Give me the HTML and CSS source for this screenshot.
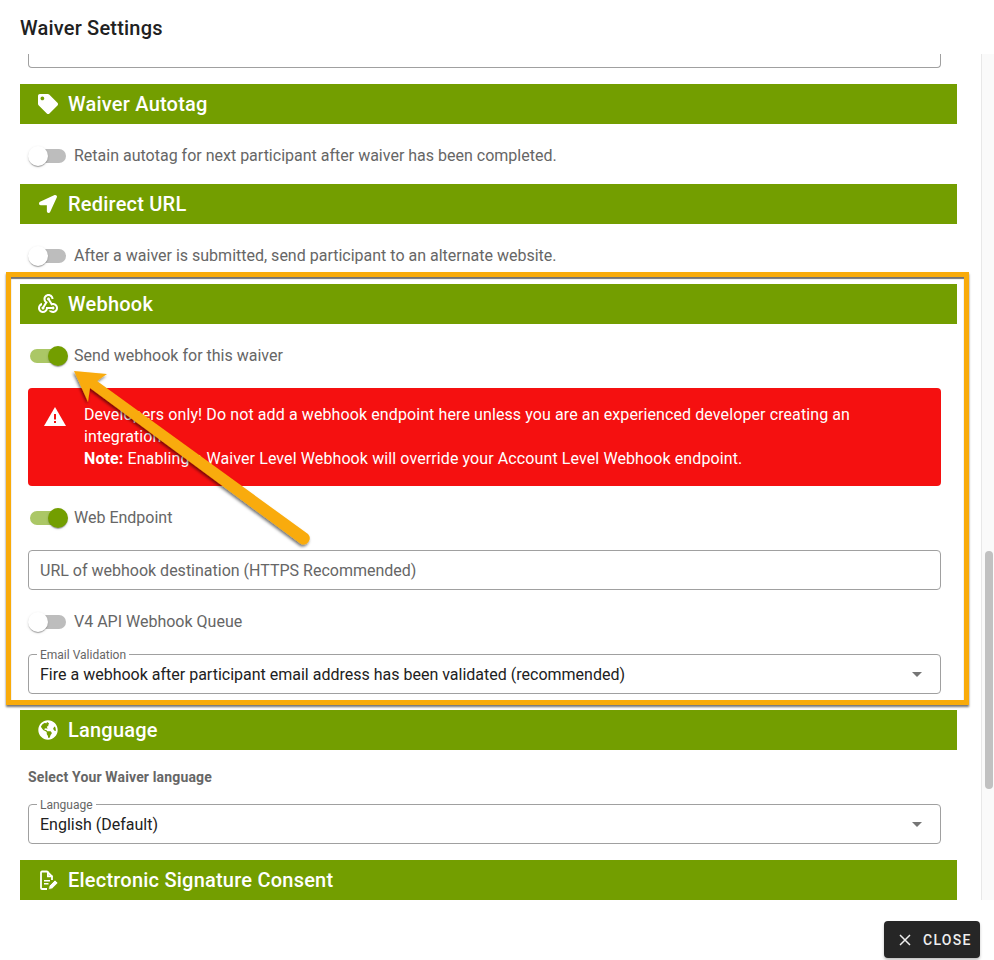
FILE: index.html
```html
<!DOCTYPE html>
<html lang="en">
<head>
<meta charset="utf-8">
<title>Waiver Settings</title>
<link rel="stylesheet" href="styles.css">
</head>
<body>
<div class="dialog">
  <header class="title-row"><h1 class="title">Waiver Settings</h1></header>
  <div class="middle">
    <main class="content">
      <div class="cut-input"></div>

      <section class="section sec-autotag">
        <h2 class="bar">
          <svg class="bar-icon" viewBox="0 0 512 512"><path fill="#fff" d="M0 252.118V48C0 21.49 21.49 0 48 0h204.118a48 48 0 0 1 33.941 14.059l211.882 211.882c18.745 18.745 18.745 49.137 0 67.882L293.823 497.941c-18.745 18.745-49.137 18.745-67.882 0L14.059 286.059A48 48 0 0 1 0 252.118zM112 64c-26.51 0-48 21.49-48 48s21.49 48 48 48 48-21.49 48-48-21.49-48-48-48z"/></svg>
          <span>Waiver Autotag</span>
        </h2>
        <div class="switch-row first"><span class="switch"><span class="thumb"></span></span><span class="label">Retain autotag for next participant after waiver has been completed.</span></div>
      </section>

      <section class="section sec-redirect">
        <h2 class="bar">
          <svg class="bar-icon arrow-icon" viewBox="0 0 512 512"><path fill="#fff" d="M444.52 3.52L28.74 195.42c-47.97 22.39-31.98 92.75 19.19 92.75h175.91v175.91c0 51.17 70.36 67.17 92.75 19.19l191.9-415.78c15.99-38.39-25.59-79.97-63.97-63.97z"/></svg>
          <span>Redirect URL</span>
        </h2>
        <div class="switch-row first"><span class="switch"><span class="thumb"></span></span><span class="label">After a waiver is submitted, send participant to an alternate website.</span></div>
      </section>

      <section class="section sec-webhook">
        <h2 class="bar">
          <svg class="bar-icon webhook" viewBox="0 0 24 24"><path fill="#fff" d="M10 15h5.88c.27-.31.67-.5 1.12-.5.83 0 1.5.67 1.5 1.5s-.67 1.5-1.5 1.5c-.44 0-.84-.19-1.12-.5H11.9c-.46 2.28-2.48 4-4.9 4-2.76 0-5-2.24-5-5 0-2.42 1.72-4.44 4-4.9v2.07c-1.16.41-2 1.53-2 2.83 0 1.65 1.35 3 3 3s3-1.35 3-3v-1zm2.5-11c1.65 0 3 1.35 3 3h2c0-2.76-2.24-5-5-5s-5 2.24-5 5c0 1.43.6 2.71 1.55 3.62l-2.35 3.9c-.68.14-1.2.75-1.2 1.48 0 .83.67 1.5 1.5 1.5s1.5-.67 1.5-1.5c0-.16-.02-.31-.07-.45l3.38-5.63C10.49 9.61 9.5 8.42 9.5 7c0-1.65 1.35-3 3-3zm4.5 9c-.64 0-1.23.2-1.72.54l-3.05-5.07C11.53 8.35 11 7.74 11 7c0-.83.67-1.5 1.5-1.5S14 6.17 14 7c0 .15-.02.29-.06.43l2.19 3.65c.28-.05.57-.08.87-.08 2.76 0 5 2.24 5 5s-2.24 5-5 5c-1.85 0-3.47-1.01-4.33-2.5h2.67c.48.32 1.05.5 1.66.5 1.65 0 3-1.35 3-3s-1.35-3-3-3z"/></svg>
          <span>Webhook</span>
        </h2>
        <div class="switch-row"><span class="switch on"><span class="thumb"></span></span><span class="label">Send webhook for this waiver</span></div>
        <div class="alert">
          <svg class="alert-icon" viewBox="0 0 22 19"><path fill="#fff" d="M11 0 22 19H0z"/><rect x="10" y="7" width="2" height="5.5" fill="#f51010"/><rect x="10" y="14" width="2" height="2" fill="#f51010"/></svg>
          <div class="alert-text">Developers only! Do not add a webhook endpoint here unless you are an experienced developer creating an integration.<br><strong>Note:</strong> Enabling a Waiver Level Webhook will override your Account Level Webhook endpoint.</div>
        </div>
        <div class="switch-row"><span class="switch on"><span class="thumb"></span></span><span class="label">Web Endpoint</span></div>
        <div class="field"><span class="placeholder">URL of webhook destination (HTTPS Recommended)</span></div>
        <div class="switch-row"><span class="switch"><span class="thumb"></span></span><span class="label">V4 API Webhook Queue</span></div>
        <div class="field select">
          <span class="float-label">Email Validation</span>
          <span class="value">Fire a webhook after participant email address has been validated (recommended)</span>
          <span class="caret"></span>
        </div>
      </section>

      <section class="section sec-language">
        <h2 class="bar">
          <svg class="bar-icon" viewBox="0 0 496 512"><path fill="#fff" d="M248 8C111.03 8 0 119.03 0 256s111.03 248 248 248 248-111.03 248-248S384.97 8 248 8zm82.29 357.6c-3.9 3.88-7.99 7.95-11.31 11.28-2.99 3-5.1 6.7-6.17 10.71-1.51 5.66-2.73 11.38-4.77 16.87l-17.39 46.85c-13.76 3-28 4.69-42.65 4.69v-27.38c1.69-12.62-7.64-36.26-22.63-51.25-6-6-9.37-14.14-9.37-22.63v-32.01c0-11.64-6.27-22.34-16.46-27.97-14.37-7.95-34.81-19.06-48.81-26.11-11.48-5.78-22.1-13.14-31.65-21.75l-.8-.72a114.792 114.792 0 0 1-18.06-20.74c-9.38-13.77-24.66-36.42-34.59-51.14 20.47-45.5 57.36-82.04 103.2-101.89l24.01 12.01C203.48 89.74 216 82.01 216 70.11v-11.3c7.99-1.29 16.12-2.11 24.39-2.42l28.3 28.3c6.25 6.25 6.25 16.38 0 22.63L264 112l-10.34 10.34c-3.12 3.12-3.12 8.19 0 11.31l4.69 4.69c3.12 3.12 3.12 8.19 0 11.31l-8 8a8.008 8.008 0 0 1-5.66 2.34h-8.99c-2.08 0-4.08.81-5.58 2.27l-9.92 9.65a8.008 8.008 0 0 0-1.58 9.31l15.59 31.19c2.66 5.32-1.21 11.58-7.15 11.58h-5.64c-1.93 0-3.79-.7-5.24-1.96l-9.28-8.06a16.017 16.017 0 0 0-15.55-3.1l-31.17 10.39a11.95 11.95 0 0 0-8.17 11.34c0 4.53 2.56 8.66 6.61 10.69l11.08 5.54c9.41 4.71 19.79 7.16 30.31 7.16s22.59 27.29 32 32h66.75c8.49 0 16.62 3.37 22.63 9.37l13.69 13.69a30.503 30.503 0 0 1 8.93 21.57 46.536 46.536 0 0 1-13.72 32.98zM417 274.25c-5.79-1.45-10.84-5-14.15-9.97l-17.98-26.97a23.97 23.97 0 0 1 0-26.62l19.59-29.38c2.32-3.47 5.5-6.29 9.24-8.15l12.98-6.49C440.2 193.59 448 223.87 448 256c0 8.67-.74 17.16-1.82 25.54L417 274.25z"/></svg>
          <span>Language</span>
        </h2>
        <p class="subhead">Select Your Waiver language</p>
        <div class="field select">
          <span class="float-label">Language</span>
          <span class="value">English (Default)</span>
          <span class="caret"></span>
        </div>
      </section>

      <section class="section">
        <h2 class="bar">
          <svg class="bar-icon" viewBox="0 0 20 20"><path fill="none" stroke="#fff" stroke-width="1.800" stroke-linejoin="round" d="M14 10V6.500L9 1.500H4a1 1 0 0 0-1 1v15.500a1 1 0 0 0 1 1h5"/><path fill="#fff" d="M9 1.500h1.800v4H14.500v1.800H9zM6 10h6v1.600H6zM6 13h4.500v1.600H6z"/><path fill="#fff" stroke="#739e00" stroke-width=".8" d="M10.500 19.500l.6-3.600 5.900-6 3 3-6 6z"/></svg>
          <span>Electronic Signature Consent</span>
        </h2>
      </section>
    </main>
    <div class="scrollbar"><div class="scroll-thumb"></div></div>
  </div>
  <footer class="footer">
    <button class="close" type="button">
      <svg class="close-icon" viewBox="0 0 12 12"><path d="M1 1l10 10M11 1L1 11" stroke="#eee" stroke-width="1.500" fill="none"/></svg>
      <span>CLOSE</span>
    </button>
  </footer>
</div>

<div class="highlight"></div>
<svg class="arrow" viewBox="0 0 994 960" width="994" height="960">
  <defs>
    <filter id="arrow-shadow" x="-10%" y="-10%" width="120%" height="120%"><feDropShadow dx="-1" dy="2" stdDeviation="1.500" flood-color="#000" flood-opacity="0.55"/></filter>
  </defs>
  <path filter="url(#arrow-shadow)" fill="#f9ab0a" d="M74 371 107 374 97 381 308 534Q311 537 309 541 306 546 301 544L90 388 88 402Z"/>
</svg>
</body>
</html>
```

FILE: styles.css
```css
* { box-sizing: border-box; }
html, body { margin: 0; padding: 0; background: #fff; }
body {
  width: 994px;
  height: 960px;
  overflow: hidden;
  position: relative;
  font-family: Roboto, "Liberation Sans", sans-serif;
  color: #666;
}
.dialog { display: flex; flex-direction: column; height: 960px; }
.title-row { height: 54px; padding: 17px 20px 0; flex: none; }
.title { margin: 0; font-size: 20px; line-height: 23px; font-weight: 500; letter-spacing: 0.2px; color: #212121; }

.middle { display: flex; height: 846px; flex: none; }
.content { flex: 1; padding: 0 24px 0 20px; overflow: hidden; }
.scrollbar { width: 13px; flex: none; background: #fafafa; border-left: 1px solid #e8e8e8; padding: 497px 1px 0 3px; }
.scroll-thumb { height: 238px; background: #c1c1c1; border-radius: 4px; }

.cut-input {
  height: 14px;
  margin: 0 16px 16px 8px;
  border: 1px solid #a0a0a0;
  border-top: 0;
  border-radius: 0 0 4px 4px;
}

.bar {
  margin: 0;
  height: 40px;
  display: flex;
  align-items: center;
  gap: 10px;
  padding-left: 18px;
  background: #739e00;
  color: #fff;
  font-size: 20px;
  font-weight: 500;
  letter-spacing: 0.22px;
}
.bar-icon { width: 20px; height: 20px; flex: none; }
.bar-icon.webhook { width: 24px; height: 24px; margin: 0 -2px; }
.bar-icon.arrow-icon { width: 18px; height: 18px; margin: 0 1px; }

.sec-autotag, .sec-redirect { padding-bottom: 16px; }
.sec-webhook { padding-bottom: 16px; }
.sec-language { padding-bottom: 16px; }

.switch-row {
  height: 24px;
  margin: 20px 16px 20px 8px;
  display: flex;
  align-items: center;
  gap: 8px;
}
.switch-row.first { margin: 20px 16px 0 8px; }
.switch { position: relative; width: 38px; height: 14px; flex: none; }
.switch::before {
  content: "";
  position: absolute;
  left: 2px; right: 0; top: 0; bottom: 0;
  border-radius: 7px;
  background: #bdbdbd;
}
.switch .thumb {
  position: absolute;
  left: 0; top: -3px;
  width: 20px; height: 20px;
  border-radius: 50%;
  background: #fff;
  box-shadow: 0 2px 1px -1px rgba(0,0,0,.2), 0 1px 1px rgba(0,0,0,.14), 0 1px 3px rgba(0,0,0,.12);
}
.switch.on::before { background: #abc766; }
.switch.on .thumb { left: 20px; background: #739e00; }
.label { font-size: 16px; line-height: 24px; color: #666; }

.alert {
  margin: 0 16px 0 8px;
  height: 98px;
  padding: 16px 16px 0;
  display: flex;
  gap: 18px;
  background: #f51010;
  border-radius: 4px;
  color: #fff;
}
.alert-icon { width: 22px; height: 19px; flex: none; margin-top: 3px; }
.alert-text { font-size: 16px; line-height: 22px; letter-spacing: 0.1px; }
.alert-text strong { font-weight: 700; }

.field {
  position: relative;
  height: 40px;
  margin: 0 16px 0 8px;
  padding: 0 11px;
  display: flex;
  align-items: center;
  border: 1px solid #a0a0a0;
  border-radius: 4px;
  font-size: 16px;
}
.placeholder { color: #666; font-size: 16px; }
.float-label {
  position: absolute;
  left: 8px; top: -6px;
  padding: 0 3px;
  background: #fff;
  font-size: 12px;
  line-height: 13px;
  color: #666;
}
.value { color: #212121; font-size: 16px; }
.caret {
  position: absolute;
  right: 18px; top: 17px;
  border-left: 5px solid transparent;
  border-right: 5px solid transparent;
  border-top: 5px solid #757575;
}
.subhead { margin: 0; padding: 20px 0 0 8px; height: 54px; font-size: 14px; line-height: 15px; font-weight: 700; color: #666; letter-spacing: 0.15px; }

.footer { flex: 1; display: flex; justify-content: flex-end; padding: 21px 14px 0 0; }
.close {
  width: 96px;
  height: 37px;
  padding: 0 0 0 15px;
  display: flex;
  align-items: center;
  gap: 12px;
  border: 0;
  border-radius: 4px;
  background: #262626;
  box-shadow: 0 2px 3px rgba(0,0,0,.25);
  color: #eee;
  font-family: inherit;
  font-size: 14px;
  font-weight: 500;
  letter-spacing: 1.25px;
}
.close-icon { width: 12px; height: 12px; flex: none; }

.highlight {
  position: absolute;
  left: 6px; top: 272px;
  width: 963px; height: 433px;
  border: 5px solid #f9ab0a;
  box-shadow: 0 2px 2px rgba(0,0,0,.55), inset 0 2px 1px rgba(0,0,0,.55);
  pointer-events: none;
}
.arrow { position: absolute; left: 0; top: 0; pointer-events: none; }
```
